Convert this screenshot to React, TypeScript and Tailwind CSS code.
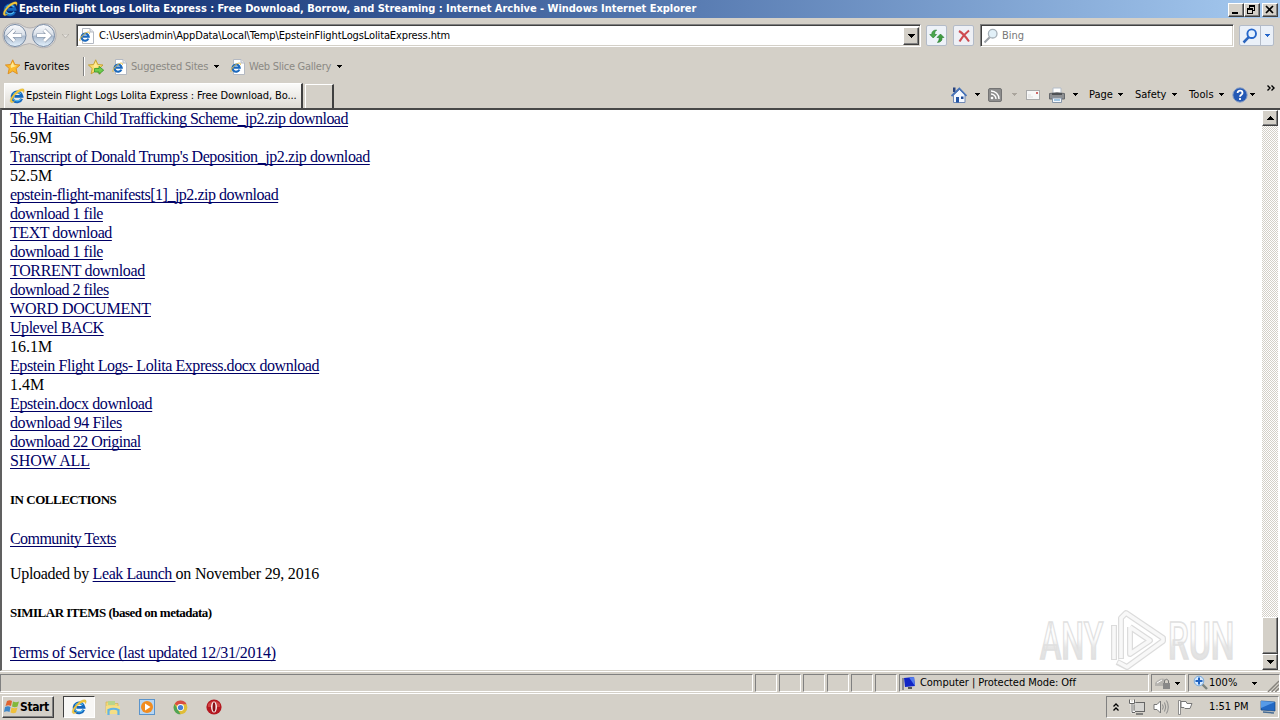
import React from 'react';

const raised = 'border border-t-white border-l-white border-r-[#404040] border-b-[#404040] bg-[#d4d0c8] shadow-[inset_-1px_-1px_0_#808080]';
const sunken = 'border border-t-[#808080] border-l-[#808080] border-r-white border-b-white';

const Arrow: React.FC<{ className?: string }> = ({ className = 'text-black' }) => (
    <svg className={`block w-[5px] h-[3px] shrink-0 ${className}`} viewBox="0 0 5 3" shapeRendering="crispEdges">
        <path d="M0 0H5V1H4V2H3V3H2V2H1V1H0Z" fill="currentColor" />
    </svg>
);

const BigArrow: React.FC<{ up?: boolean }> = ({ up }) => (
    <svg className={`block w-[7px] h-[4px] shrink-0 ${up ? 'rotate-180' : ''}`} viewBox="0 0 7 4" shapeRendering="crispEdges">
        <path d="M0 0H7V1H6V2H5V3H4V4H3V3H2V2H1V1H0Z" />
    </svg>
);

const IeLogo: React.FC<{ className?: string }> = ({ className = 'w-4 h-4' }) => (
    <svg className={`block shrink-0 ${className}`} viewBox="0 0 16 16" fill="none">
        <path d="M12.7 10.7A5 5 0 1 1 13 8.3H5.4" stroke="#1467bd" strokeWidth="2.8" />
        <path d="M12 10.9A4.8 4.8 0 0 1 4 10.5M4.2 6.3A4.8 4.8 0 0 1 12 6" stroke="#4fb7ee" strokeWidth="1.1" />
        <path d="M2.2 14.6C-.3 13.7 1.8 8.4 6.3 4.4C10.3 .8 14.9 -.5 15.2 2.3C15.3 3.1 15 4 14.5 4.8C14.5 1.6 10.5 3 7 6.3C3.7 9.4 2.2 12.7 3.5 13.3C4.2 13.7 5 13.4 6 12.8C4.6 14.3 3.2 15 2.2 14.6Z" fill="#f4c93c" stroke="#bd9d2d" strokeWidth=".3" />
    </svg>
);

const IePage: React.FC = () => (
    <svg className="block w-4 h-4 shrink-0" viewBox="0 0 16 16" fill="none">
        <path d="M3.5.5H11L14.5 4V15.5H3.5Z" fill="#fff" stroke="#b4b9c2" />
        <path d="M11 .5V4H14.5" stroke="#b4b9c2" fill="#e4e7ec" />
        <path d="M9.4 10.6A3.6 3.6 0 1 1 9.7 8.6H4" stroke="#1b69bd" strokeWidth="2.1" />
        <path d="M1.2 13C-.4 11.5 3.5 6.7 7.3 4.6C9 3.8 10.9 3.8 10.5 5.7" stroke="#dfb73c" strokeWidth="1" />
    </svg>
);

const Star: React.FC<{ add?: boolean }> = ({ add }) => (
    <svg className="block w-4 h-4 shrink-0" viewBox="0 0 16 16">
        <path d="M7.7.8L9.8 5.5L15 6L11.1 9.5L12.3 14.8L7.7 12.1L3.1 14.8L4.2 9.5L.4 6L5.6 5.5Z" fill={add ? '#f9dc69' : '#fbba2c'} stroke={add ? '#c29d2c' : '#dc8b1b'} strokeWidth=".9" />
        <path d="M7.7 3L9 6.3L12 6.7L6 9L5.6 6.7Z" fill="#ffe994" />
        {add && <path d="M6.5 9.5H11V7.3L15.7 11.2L11 15.2V13H6.5Z" fill="#6fcc4c" stroke="#33962b" strokeWidth=".8" />}
    </svg>
);

const NavButtons: React.FC = () => (
    <svg className="block w-[56px] h-[28px]" viewBox="0 0 56 28" fill="none">
        <defs>
            <linearGradient id="orb" x1="0" y1="0" x2="0" y2="1">
                <stop offset="0" stopColor="#fafbfd" />
                <stop offset=".48" stopColor="#d8dfe8" />
                <stop offset=".52" stopColor="#aabace" />
                <stop offset="1" stopColor="#e4f2fd" />
            </linearGradient>
        </defs>
        <path d="M2 12C3 0 17 -1 22 4Q29 8 36 4C44 -1 55 2 55 13C55 25 42 29 34 23Q29 20 22 23C12 29 1 23 2 12Z" fill="#dddcdc" stroke="#aaa7aa" strokeWidth=".8" />
        <circle cx="14" cy="13.5" r="11" fill="url(#orb)" stroke="#788ba4" />
        <circle cx="42.500" cy="13.5" r="11" fill="url(#orb)" stroke="#788ba4" />
        <path d="M21 13.5H8.500M13.500 8L8 13.5L13.500 19" stroke="#8492a5" strokeWidth="4" />
        <path d="M20.500 13.5H8.500M13.500 8L8 13.5L13.500 19" stroke="#fff" strokeWidth="2.9" />
        <path d="M35.500 13.5H48M43 8L48.500 13.5L43 19" stroke="#8492a5" strokeWidth="4" />
        <path d="M36 13.5H48M43 8L48.500 13.5L43 19" stroke="#fff" strokeWidth="2.9" />
    </svg>
);

const Magnifier: React.FC<{ blue?: boolean }> = ({ blue }) => (
    <svg className="block w-4 h-4 shrink-0" viewBox="0 0 16 16" fill="none">
        <path d="M6.7 9.2L1.5 14.5" stroke={blue ? '#2b65bd' : '#9ba1a7'} strokeWidth={blue ? 2.5 : 2} />
        <circle cx="9.7" cy="5.7" r="4.3" fill={blue ? '#e4f1ff' : '#e2f0f8'} stroke={blue ? '#2466ca' : '#a6b0b8'} strokeWidth={blue ? 1.9 : 1.3} />
    </svg>
);

const TitleBar: React.FC = () => (
    <div className="h-[18px] flex items-center pl-[2px] pr-[2px] bg-linear-to-r from-[#0a246a] to-[#a6caf0]">
        <IeLogo />
        <div className="ml-[1px] font-bold text-white text-[11px] tracking-[-0.03px] whitespace-nowrap">
            Epstein Flight Logs Lolita Express : Free Download, Borrow, and Streaming : Internet Archive - Windows Internet Explorer
        </div>
        <div className="ml-auto flex mt-px">
            <div className={`w-4 h-[14px] ${raised}`}>
                <svg viewBox="0 0 14 12" shapeRendering="crispEdges"><path d="M3 8H9V10H3Z" /></svg>
            </div>
            <div className={`w-4 h-[14px] ${raised}`}>
                <svg viewBox="0 0 14 12" shapeRendering="crispEdges"><path d="M4 1H10V7H8V10H2V4H4ZM5 3V4H8V6H9V3ZM3 6V9H7V6Z" fillRule="evenodd" /></svg>
            </div>
            <div className={`w-4 h-[14px] ml-[2px] ${raised}`}>
                <svg viewBox="0 0 14 12"><path d="M3 2L10 9M10 2L3 9" stroke="#000" strokeWidth="1.7" /></svg>
            </div>
        </div>
    </div>
);

const AddressRow: React.FC = () => (
    <div className="h-[34px] flex items-start">
        <div className="pt-[4px] pl-[1px] w-[57px]"><NavButtons /></div>
        <div className="w-[19px] pt-[16px] pl-[5px]">
            <svg className="block w-[7px] h-[4px]" viewBox="0 0 7 4"><path d="M0 0H7L3.5 4Z" fill="#e4e1dc" stroke="#aaa69f" strokeWidth=".7" /></svg>
        </div>
        <div className="mt-[6px] w-[845px] h-[23px] flex items-center bg-white border border-t-[#808080] border-l-[#808080] border-r-white border-b-white shadow-[inset_1px_1px_0_#404040,inset_-1px_-1px_0_#d4d0c8] pl-[2px] pr-px">
            <IePage />
            <div className="ml-[4px] tracking-[-0.12px]">C:\Users\admin\AppData\Local\Temp\EpsteinFlightLogsLolitaExpress.htm</div>
            <div className={`ml-auto w-4 h-[18px] flex items-center justify-center ${raised}`}><BigArrow /></div>
        </div>
        <div className="ml-[5px] mt-[7px] w-[21px] h-[21px] flex items-center justify-center rounded-[2px] border border-[#b3bbc8] bg-[#eef2f8]">
            <svg className="w-4 h-4" viewBox="0 0 16 16">
                <path d="M.8 6.5L4.200 10L7.600 6.5H5.700V5Q5.700 3.5 7.700 2Q2.700 2 2.700 6.5Z" fill="#4ba84c" stroke="#277b2d" strokeWidth=".6" />
                <path d="M8 9.5L11.5 6L15 9.5H13Q13.5 14 8.5 14.5Q10.5 12.5 10.2 9.5Z" fill="#3f9b40" stroke="#277b2d" strokeWidth=".6" />
            </svg>
        </div>
        <div className="ml-[6px] mt-[7px] w-[21px] h-[21px] flex items-center justify-center rounded-[2px] border border-[#b3bbc8] bg-[#eef0f5]">
            <svg className="w-4 h-4" viewBox="0 0 16 16"><path d="M3 3Q8 6 13 13.5M13 2.5Q7 7 3.5 13.5" stroke="#ce4a50" strokeWidth="2.1" fill="none" /></svg>
        </div>
        <div className="ml-[6px] mt-[6px] w-[254px] h-[23px] flex items-center bg-white border border-t-[#808080] border-l-[#808080] border-r-white border-b-white shadow-[inset_1px_1px_0_#404040,inset_-1px_-1px_0_#d4d0c8] pl-[2px]">
            <Magnifier />
            <div className="ml-[3px] text-[#777]">Bing</div>
        </div>
        <div className="ml-[5px] mt-[7px] w-[35px] h-[21px] flex rounded-[2px] border border-[#b3bbc8] bg-[#eaf0f8]">
            <div className="w-[21px] flex items-center justify-center border-r border-[#b3bbc8]"><Magnifier blue /></div>
            <div className="flex-1 flex items-center justify-center"><Arrow className="text-[#2466ca]" /></div>
        </div>
    </div>
);

const FavoritesRow: React.FC = () => (
    <div className="h-[29px] flex items-center pl-[5px]">
        <Star />
        <div className="w-[59px] ml-[3px] tracking-[0.1px]">Favorites</div>
        <div className="w-[2px] h-[19px] border-l border-l-[#808080] border-r border-r-white" />
        <div className="ml-[3px]"><Star add /></div>
        <div className="ml-[8px]"><IePage /></div>
        <div className="w-[83px] ml-[3px] text-[#8b8984] tracking-[-0.18px]">Suggested Sites</div>
        <Arrow />
        <div className="ml-[11px]"><IePage /></div>
        <div className="w-[88px] ml-[3px] text-[#8b8984] tracking-[-0.25px]">Web Slice Gallery</div>
        <Arrow />
    </div>
);

const TabRow: React.FC = () => (
    <div className="h-[27px] flex items-end pl-[4px]">
        <div className="w-[299px] h-[25px] flex items-center pl-[4px] bg-linear-to-b from-[#fbfbfa] to-[#dedbd5] border-t border-l border-white border-r-2 border-r-[#404040]">
            <IeLogo />
            <div className="ml-[1px] tracking-[-0.1px] whitespace-nowrap">Epstein Flight Logs Lolita Express : Free Download, Bo...</div>
        </div>
        <div className="ml-[2px] w-[29px] h-[24px] border-t border-l border-white border-r-2 border-r-[#404040]" />
        <div className="ml-auto h-[27px] flex items-center">
            <svg className="w-4 h-[18px]" viewBox="0 0 16 18">
                <path d="M2 1.500H4.500V6H2Z" fill="#27427e" />
                <path d="M2.5 9L8.5 3.5L14 9V16.5H2.5Z" fill="#f4f8ff" stroke="#6f88b4" />
                <path d="M.5 10L8.3 2.5L15.5 10" stroke="#4773b8" strokeWidth="1.8" fill="none" />
                <path d="M5 11H8V16.5H5Z" fill="#2355a5" />
                <path d="M10 10.5H12.5V13H10Z" fill="#1e4a96" />
            </svg>
            <div className="ml-[8px]"><Arrow /></div>
            <svg className="ml-[8px] w-[14px] h-[14px]" viewBox="0 0 14 14" fill="none">
                <rect x=".5" y=".5" width="13" height="13" rx="1.5" fill="#8d8d8d" stroke="#747474" />
                <path d="M3 6A5 5 0 0 1 8 11M3 3A8 8 0 0 1 11 11" stroke="#fff" strokeWidth="1.4" />
                <circle cx="4" cy="10" r="1.3" fill="#fff" />
            </svg>
            <div className="ml-[10px]"><Arrow className="text-[#aaa59d]" /></div>
            <svg className="ml-[9px] w-[14px] h-[10px]" viewBox="0 0 14 10">
                <rect x=".5" y=".5" width="13" height="9" fill="#f7f7f7" stroke="#aaa" />
                <path d="M2 7H7M2 5H5" stroke="#ddd" />
                <rect x="10" y="2" width="2" height="2" fill="#cf6968" />
            </svg>
            <svg className="ml-[9px] w-4 h-4" viewBox="0 0 16 16">
                <path d="M4 1H12V7H4Z" fill="#fff" stroke="#b4bdc9" />
                <path d="M.5 6.500Q8 5 15.5 6.500V12H.5Z" fill="#8d8f92" stroke="#66696d" />
                <path d="M3 6H13V8H3Z" fill="#4f5256" />
                <path d="M3.5 11H12.5V15.500H3.5Z" fill="#f4f8fc" stroke="#8796a8" />
                <path d="M5 13H11" stroke="#4d93c9" />
            </svg>
            <div className="ml-[8px]"><Arrow /></div>
            <div className="ml-[11px] w-[29px]">Page</div><Arrow />
            <div className="ml-[12px] w-[37px] tracking-[-0.05px]">Safety</div><Arrow />
            <div className="ml-[12px] w-[30px] tracking-[0.1px]">Tools</div><Arrow />
            <svg className="ml-[8px] w-4 h-4" viewBox="0 0 16 16" fill="none">
                <circle cx="8" cy="8" r="7.2" fill="#2459b5" stroke="#8da1c4" />
                <path d="M5.6 6C5.6 2.9 10.5 3 10.5 6C10.5 7.8 8 7.7 8 9.8M8 11V13" stroke="#fff" strokeWidth="1.8" />
            </svg>
            <div className="ml-[2px]"><Arrow /></div>
            <svg className="ml-[12px] mr-[4px] mb-[13px] w-[9px] h-[6px]" viewBox="0 0 9 6" fill="none"><path d="M.5 .5L3 3L.5 5.5M4.5 .5L7 3L4.5 5.5" stroke="#000" strokeWidth="1.4" /></svg>
        </div>
    </div>
);

const Link: React.FC<{ children: React.ReactNode; className?: string }> = ({ children, className }) => (
    <a className={`text-[#000066] underline decoration-1 underline-offset-2 [text-decoration-skip-ink:none] whitespace-pre ${className || ''}`}>{children}</a>
);

const files = [
    { text: 'The Haitian Child Trafficking Scheme_jp2.zip download', link: 'tracking-[-0.51px]' },
    { text: '56.9M' },
    { text: "Transcript of Donald Trump's Deposition_jp2.zip download", link: 'tracking-[-0.41px]' },
    { text: '52.5M' },
    { text: 'epstein-flight-manifests[1]_jp2.zip download', link: 'tracking-[-0.49px]' },
    { text: 'download 1 file', link: 'tracking-[-0.5px]' },
    { text: 'TEXT download', link: 'tracking-[-0.45px]' },
    { text: 'download 1 file', link: 'tracking-[-0.5px]' },
    { text: 'TORRENT download', link: 'tracking-[-0.34px]' },
    { text: 'download 2 files', link: 'tracking-[-0.5px]' },
    { text: 'WORD DOCUMENT', link: 'tracking-[-0.2px]' },
    { text: 'Uplevel BACK', link: 'tracking-[-0.46px]' },
    { text: '16.1M' },
    { text: 'Epstein Flight Logs- Lolita Express.docx download', link: 'tracking-[-0.44px]' },
    { text: '1.4M' },
    { text: 'Epstein.docx download', link: 'tracking-[-0.38px]' },
    { text: 'download 94 Files', link: 'tracking-[-0.38px]' },
    { text: 'download 22 Original', link: 'tracking-[-0.48px]' },
    { text: 'SHOW ALL', link: 'tracking-[-0.15px]' },
];

const Watermark: React.FC = () => (
    <svg className="absolute left-[1034px] top-[497px] w-[204px] h-[68px] overflow-visible" viewBox="0 0 204 68" fill="none">
        <defs>
            <linearGradient id="wm" x1="0" y1="0" x2="0" y2="1">
                <stop offset=".45" stopColor="#fdfdfd" />
                <stop offset=".6" stopColor="#e6e6e6" />
                <stop offset="1" stopColor="#dedede" />
            </linearGradient>
        </defs>
        <g fontFamily="Roboto, sans-serif" fontSize="51" fontWeight="500" fill="url(#wm)" stroke="#e0e0e0" strokeWidth="1.6">
            <text transform="translate(4 52) scale(.62 1)" textLength="102" lengthAdjust="spacingAndGlyphs">ANY</text>
            <text transform="translate(132 52) scale(.62 1)" textLength="107" lengthAdjust="spacingAndGlyphs">RUN</text>
        </g>
        <path d="M78 53V18M85 52V11L90 6L127 31V34L91 60L81 55M94 20V47L114 33.5L94 20" stroke="#dcdcdc" strokeWidth="6" strokeLinejoin="round" />
        <path d="M78 52V19M85 51V11L90 6L127 31V34L91 60L82 55M94 20V47L114 33.5L94 20" stroke="#f8f8f8" strokeWidth="3.6" strokeLinejoin="round" />
    </svg>
);

const Page: React.FC = () => (
    <div className="relative h-[563px] flex bg-white border-t-2 border-t-[#484848] border-l-2 border-l-[#606060] border-b border-b-[#d4d0c8]">
        <div className="flex-1 pl-[8px] -mt-px font-['Liberation_Serif',serif] text-[16px] leading-[19px] text-black">
            {files.map((f, i) => (
                <div key={i} className="h-[19px] whitespace-pre">{f.link ? <Link className={f.link}>{f.text}</Link> : f.text}</div>
            ))}
            <h5 className="mt-[21px] h-[17px] leading-[17px] text-[13px] font-bold tracking-[-0.48px]">IN COLLECTIONS</h5>
            <div className="mt-[21px] h-[19px]"><Link className="tracking-[-0.58px]">Community Texts</Link></div>
            <div className="mt-[16px] h-[19px] whitespace-pre">
                <span className="tracking-[-0.3px]">Uploaded by </span>
                <Link className="tracking-[-0.42px]">Leak Launch </Link>
                <span className="tracking-[-0.2px]">on November 29, 2016</span>
            </div>
            <h5 className="mt-[21px] h-[17px] leading-[17px] text-[13px] font-bold tracking-[-0.5px]">SIMILAR ITEMS (based on metadata)</h5>
            <div className="mt-[22px] h-[19px]"><Link className="tracking-[-0.28px]">Terms of Service (last updated 12/31/2014)</Link></div>
        </div>
        <div className="w-4 mr-[2px] flex flex-col bg-[repeating-conic-gradient(#ffffff_0_25%,#d4d0c8_0_50%)] bg-[length:2px_2px]">
            <div className={`h-4 flex items-center justify-center ${raised}`}><BigArrow up /></div>
            <div className={`mt-auto h-[37px] ${raised}`} />
            <div className={`h-4 flex items-center justify-center ${raised}`}><BigArrow /></div>
        </div>
        <Watermark />
    </div>
);

const StatusBar: React.FC = () => (
    <div className="h-[22px] flex pt-[2px] pb-px border-t border-t-white">
        <div className={`w-[753px] ${sunken}`} />
        {[0, 1, 2, 3, 4, 5].map((i) => <div key={i} className={`ml-[2px] w-[22px] ${sunken}`} />)}
        <div className={`ml-[2px] w-[250px] flex items-center pl-px ${sunken}`}>
            <svg className="w-4 h-4" viewBox="0 0 16 16">
                <path d="M1 3H3V15H1Z" fill="#8b8b91" />
                <path d="M3 3L13 2L14 11L4 12Z" fill="#1225c6" />
                <path d="M8 2.5L13 2L14 11Z" fill="#557cee" />
                <path d="M7 12H11V14H7Z" fill="#555" />
            </svg>
            <div className="ml-[3px] tracking-[-0.05px] whitespace-nowrap">Computer | Protected Mode: Off</div>
        </div>
        <div className={`ml-[2px] w-[35px] flex items-center pl-[3px] ${sunken}`}>
            <svg className="w-4 h-4" viewBox="0 0 16 16">
                <path d="M0 8Q5 2 10 4V11H0Z" fill="#b5b3af" />
                <path d="M2 8L7 5" stroke="#fff" />
                <rect x="8" y="8" width="7" height="6" fill="#888" />
                <path d="M9.5 8V5.5Q11.5 3 13.5 5.5V8" stroke="#777" fill="none" />
            </svg>
            <div className="ml-[4px]"><Arrow /></div>
        </div>
        <div className={`ml-[2px] w-[92px] flex items-center pl-[4px] ${sunken}`}>
            <svg className="w-4 h-4" viewBox="0 0 16 16" fill="none">
                <path d="M9 9L14 14" stroke="#7d837e" strokeWidth="2.4" />
                <circle cx="6" cy="6" r="4.8" fill="#d7eaff" stroke="#78a9db" />
                <path d="M6 2.5V9.5M2.5 6H9.5" stroke="#1f62c1" strokeWidth="2" />
            </svg>
            <div className="w-[43px]">100%</div>
            <Arrow />
            <svg className="ml-auto mt-[5px] w-[12px] h-[12px]" viewBox="0 0 13 13"><path d="M1 13L13 1M5 13L13 5M9 13L13 9" stroke="#85827c" strokeWidth="1.5" /></svg>
        </div>
    </div>
);

const Taskbar: React.FC = () => (
    <div className="h-[27px] flex items-start border-t border-t-white">
        <div className={`ml-[2px] mt-[2px] w-[52px] h-[22px] flex items-center ${raised}`}>
            <svg className="ml-px w-4 h-4 shrink-0" viewBox="0 0 16 16">
                <path d="M3 2Q6 .5 8 2L7 7Q4.500 5.500 1.500 7Z" fill="#df6330" />
                <path d="M9 2.500Q12 4 15 2.500L13.500 7.500Q11 9 8 7.500Z" fill="#82b83b" />
                <path d="M1 8Q4 6.500 6.500 8L5.500 13Q3 11.500 0 13Z" fill="#3d86c8" />
                <path d="M7.500 8.500Q10.500 10 13.500 8.500L12 13.500Q9.500 15 6.500 13.500Z" fill="#efc03b" />
            </svg>
            <div className="text-[12px] font-bold tracking-[-0.4px]">Start</div>
        </div>
        <div className="ml-[9px] mt-[2px] w-[32px] h-[22px] flex items-center justify-center bg-[#f8f7f5] border border-t-[#404040] border-l-[#404040] border-r-white border-b-white"><IeLogo /></div>
        <svg className="ml-[10px] mt-[6px] w-4 h-4" viewBox="0 0 16 16">
            <path d="M1 2H6L7 3.500H13V13H1Z" fill="#f3d978" stroke="#d4b253" strokeWidth=".7" />
            <path d="M3 1H10V5H3Z" fill="#b8d58c" />
            <path d="M1 6H15V14H1Z" fill="#f5de85" />
            <path d="M3.500 15V10Q8.500 7.500 13.500 10V15" stroke="#61b3e6" strokeWidth="2.200" fill="none" />
        </svg>
        <svg className="ml-[18px] mt-[5px] w-4 h-4" viewBox="0 0 16 16">
            <rect x=".5" y=".5" width="15" height="15" fill="#b7d6f3" stroke="#5b94cb" />
            <circle cx="8" cy="8" r="6" fill="#f18c20" />
            <path d="M6 4.500L11.500 8L6 11.500Z" fill="#fff" />
        </svg>
        <svg className="ml-[18px] mt-[6px] w-[15px] h-[15px]" viewBox="0 0 16 16">
            <circle cx="8" cy="8" r="7.300" fill="#e0bd37" />
            <path d="M8 8L1.700 4.300A7.300 7.300 0 0 1 14.500 4.600H8Z" fill="#d94d42" />
            <path d="M1.700 4.300L8 15.300A7.300 7.300 0 0 1 1.700 4.300Z" fill="#4fa456" />
            <circle cx="8" cy="8" r="3.700" fill="#fff" />
            <circle cx="8" cy="8" r="2.800" fill="#467fd5" />
        </svg>
        <svg className="ml-[18px] mt-[5px] w-4 h-4" viewBox="0 0 16 16">
            <circle cx="8" cy="8" r="7.600" fill="#b41820" />
            <path d="M2 5Q8 -1 14 5V8H2Z" fill="#cf4242" />
            <ellipse cx="8" cy="8" rx="2.900" ry="5.500" fill="#fff" />
            <ellipse cx="8" cy="8" rx="1.500" ry="4.800" fill="#8b1016" />
        </svg>
        <div className={`ml-auto mr-[1px] mt-[2px] w-[173px] h-[22px] flex items-center pl-[6px] ${sunken}`}>
            <svg className="w-[6px] h-[8px]" viewBox="0 0 6 8" fill="none"><path d="M.5 3.500L3 1L5.500 3.500M.5 7.500L3 5L5.500 7.500" stroke="#000" strokeWidth="1.300" /></svg>
            <svg className="ml-[10px] w-4 h-4" viewBox="0 0 16 16" fill="none">
                <rect x="5" y="3.500" width="10.500" height="9" fill="#d5d4d1" stroke="#666" />
                <path d="M7 15H14" stroke="#666" strokeWidth="1.500" />
                <path d="M1 1V4H5V1M3 4V13H6" stroke="#fff" strokeWidth="2.500" />
                <path d="M.5 .5V4.500H5.500V.5M3 5V13.500H6" stroke="#666" />
            </svg>
            <svg className="ml-[8px] w-4 h-4" viewBox="0 0 16 16" fill="none">
                <path d="M1 5.500H4L7.500 2V14L4 10.500H1Z" fill="#fff" stroke="#777" />
                <path d="M9.500 5.500Q11 8 9.500 10.500M11.500 3.500Q14 8 11.500 12.500M13.500 1.500Q17 8 13.500 14.500" stroke="#8a8a8a" />
            </svg>
            <svg className="ml-[8px] w-4 h-4" viewBox="0 0 16 16">
                <path d="M1.500 1.500H3.500V15.500H1.500Z" fill="#fff" stroke="#777" strokeWidth=".8" />
                <path d="M4 2.500H9L10 4.500H15L13 9.500H8L7 8.500H4Z" fill="#fff" stroke="#777" />
            </svg>
            <div className="ml-[16px] w-[49px] tracking-[-0.05px] whitespace-nowrap">1:51 PM</div>
            <svg className="ml-[2px] w-4 h-4" viewBox="0 0 16 16">
                <path d="M1 2L15 3V12L1 11Z" fill="#2369c4" stroke="#174783" strokeWidth=".7" />
                <path d="M1 2L15 3L1 9Z" fill="#579be7" />
                <path d="M3 13L14 14" stroke="#456b94" strokeWidth="1.500" />
            </svg>
        </div>
    </div>
);

const App: React.FC = () => {
    return (
        <div className="w-[1280px] h-[720px] overflow-hidden flex flex-col bg-[#d4d0c8] text-black font-['DejaVu_Sans_Condensed','DejaVu_Sans',sans-serif] text-[11px] leading-[14px] [&>*]:shrink-0">
            <TitleBar />
            <AddressRow />
            <FavoritesRow />
            <TabRow />
            <Page />
            <StatusBar />
            <Taskbar />
        </div>
    );
};

export default App;
